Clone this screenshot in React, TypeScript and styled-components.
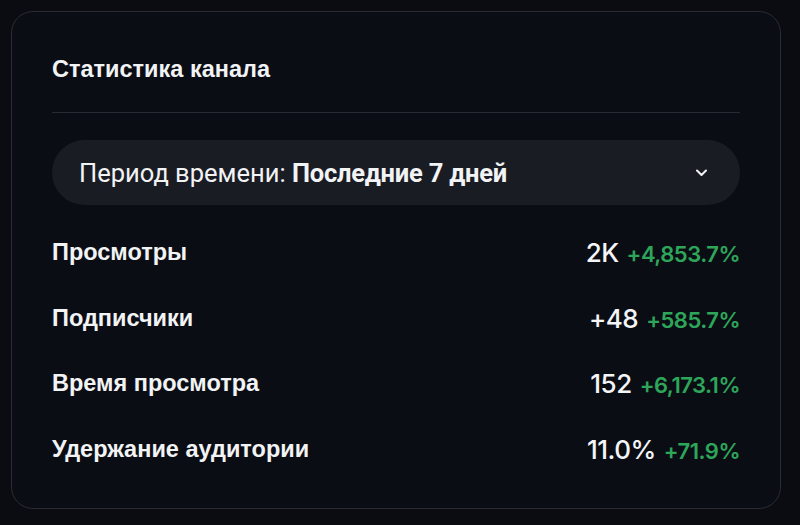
import React from "react";
import styled, { createGlobalStyle } from "styled-components";

const GlobalStyle = createGlobalStyle`
  html, body {
    margin: 0;
    padding: 0;
    background: #0a0c12;
  }
  body {
    width: 800px;
    height: 525px;
    overflow: hidden;
  }
`;

const Page = styled.div`
  box-sizing: border-box;
  width: 800px;
  height: 525px;
  padding: 11px 19px 16px 11px;
`;

const Card = styled.section`
  box-sizing: border-box;
  height: 100%;
  background: #0b0d14;
  border: 1px solid #2a2c35;
  border-radius: 22px;
  padding: 0 40px 0 40px;
  display: flex;
  flex-direction: column;
`;

const Title = styled.h2`
  margin: 0;
  padding: 43px 0 29px;
  font-family: "Liberation Sans", Arial, sans-serif;
  font-weight: 700;
  font-size: 23.5px;
  line-height: 28px;
  color: #f2f3f5;
  border-bottom: 1px solid #272a32;
`;

const Select = styled.button`
  margin-top: 27px;
  height: 65px;
  border: none;
  border-radius: 33px;
  background: #1a1c24;
  display: flex;
  align-items: center;
  justify-content: space-between;
  padding: 0 32px 0 27px;
  color: #f2f3f5;
  font-family: Roboto, "Liberation Sans", sans-serif;
  font-size: 25.5px;
  cursor: pointer;
`;

const SelectLabel = styled.span`
  font-weight: 400;
  b {
    font-weight: 700;
    letter-spacing: -0.2px;
  }
`;

const List = styled.div`
  display: flex;
  flex-direction: column;
  margin-top: 15px;
`;

const Row = styled.div`
  height: 65.5px;
  display: flex;
  align-items: center;
  justify-content: space-between;
`;

const Label = styled.span`
  font-family: "Liberation Sans", Arial, sans-serif;
  font-weight: 700;
  font-size: 23.5px;
  color: #f2f3f5;
`;

const Values = styled.span`
  display: flex;
  align-items: baseline;
  gap: 8px;
  font-family: Inter, "Noto Sans", sans-serif;
`;

const Main = styled.span`
  font-size: 26px;
  font-weight: 500;
  letter-spacing: -0.5px;
  color: #f4f5f7;
`;

const Delta = styled.span`
  font-size: 22px;
  font-weight: 600;
  letter-spacing: -0.5px;
  color: #2ea65a;
`;

const stats = [
  { label: "Просмотры", value: "2K", delta: "+4,853.7%" },
  { label: "Подписчики", value: "+48", delta: "+585.7%" },
  { label: "Время просмотра", value: "152", delta: "+6,173.1%" },
  { label: "Удержание аудитории", value: "11.0%", delta: "+71.9%" },
];

export default function App() {
  return (
    <>
      <GlobalStyle />
      <Page>
        <Card>
          <Title>Статистика канала</Title>
          <Select type="button">
            <SelectLabel>
              Период времени: <b>Последние 7 дней</b>
            </SelectLabel>
            <svg width="13" height="8" viewBox="0 0 13 8" fill="none">
              <path
                d="M2 1.5L6.5 6L11 1.5"
                stroke="#f2f3f5"
                strokeWidth="2"
                strokeLinecap="round"
                strokeLinejoin="round"
              />
            </svg>
          </Select>
          <List>
            {stats.map((s) => (
              <Row key={s.label}>
                <Label>{s.label}</Label>
                <Values>
                  <Main>{s.value}</Main>
                  <Delta>{s.delta}</Delta>
                </Values>
              </Row>
            ))}
          </List>
        </Card>
      </Page>
    </>
  );
}
